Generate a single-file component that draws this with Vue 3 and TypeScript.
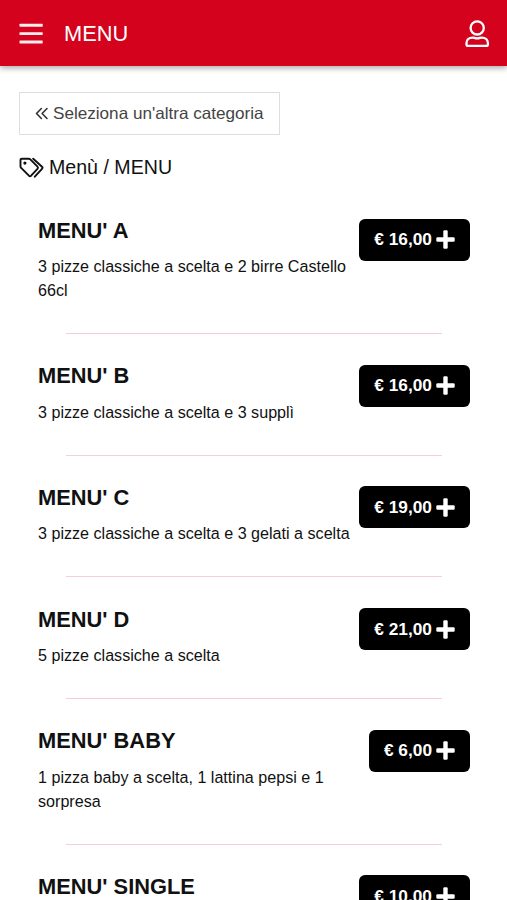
<script setup lang="ts">
interface MenuItem {
  name: string
  description: string
  price: string
}

const items: MenuItem[] = [
  { name: "MENU' A", description: '3 pizze classiche a scelta e 2 birre Castello 66cl', price: '16,00' },
  { name: "MENU' B", description: '3 pizze classiche a scelta e 3 supplì', price: '16,00' },
  { name: "MENU' C", description: '3 pizze classiche a scelta e 3 gelati a scelta', price: '19,00' },
  { name: "MENU' D", description: '5 pizze classiche a scelta', price: '21,00' },
  { name: "MENU' BABY", description: '1 pizza baby a scelta, 1 lattina pepsi e 1 sorpresa', price: '6,00' },
  { name: "MENU' SINGLE", description: '', price: '10,00' },
]
</script>

<template>
  <div class="page">
    <header class="bar">
      <button class="icon-button" aria-label="Menu">
        <svg width="24" height="22" viewBox="0 0 24 22" fill="#fff" fill-opacity=".93">
          <rect x=".5" y="1.800" width="23.200" height="2.900" rx=".4" />
          <rect x=".5" y="10.200" width="23.200" height="2.900" rx=".4" />
          <rect x=".5" y="18.600" width="23.200" height="2.900" rx=".4" />
        </svg>
      </button>
      <h1>MENU</h1>
      <button class="icon-button user" aria-label="Account">
        <svg width="26" height="30" viewBox="0 0 26 30" fill="none" stroke="#fff" stroke-width="2.300" stroke-linejoin="round">
          <circle cx="13.200" cy="9.900" r="6.600" />
          <path d="M8.700 19.600C4.800 19.600 2.500 22 2.500 25V26.200Q2.500 27.900 4.200 27.900H22.200Q23.900 27.900 23.900 26.200V25C23.900 22 21.600 19.600 17.700 19.600C16.400 19.600 15.400 20.400 13.200 20.400S10 19.600 8.700 19.600Z" />
        </svg>
      </button>
    </header>

    <main>
      <button class="back">
        <svg width="14" height="14" viewBox="0 0 14 14" fill="none" stroke="#333" stroke-width="1.600" stroke-linecap="round" stroke-linejoin="round">
          <path d="M6.400 1.500L1.500 6.500L6.400 11.500M12 1.500L7.100 6.500L12 11.500" />
        </svg>
        <span>Seleziona un'altra categoria</span>
      </button>

      <div class="crumbs">
        <svg width="25" height="22" viewBox="0 0 25 22" fill="none" stroke="#111" stroke-width="1.900" stroke-linecap="round" stroke-linejoin="round">
          <path d="M3 1.700H9.700Q10.600 1.700 11.300 2.400L18.500 9.600Q19.500 10.700 18.500 11.800L12.100 18.700Q11 19.700 9.900 18.700L2.400 11.200Q1.500 10.400 1.500 9.400V3.100Q1.500 1.700 3 1.700Z" />
          <path d="M14.200 1.700L23 9.700Q24 10.700 23 11.800L15.800 19.700" />
          <circle cx="5.900" cy="6.100" r="1.600" fill="#111" stroke="none" />
        </svg>
        <span>Menù / MENU</span>
      </div>

      <section class="list">
        <article v-for="item in items" :key="item.name" class="item">
          <div class="row">
            <div class="info">
              <h2>{{ item.name }}</h2>
              <p>{{ item.description }}</p>
            </div>
            <button class="price">
              <span>€ {{ item.price }}</span>
              <svg width="19" height="19" viewBox="0 0 19 19" fill="#fff">
                <rect x="7.300" y=".3" width="4.400" height="18.400" rx="1.200" />
                <rect x=".3" y="7.300" width="18.400" height="4.400" rx="1.200" />
              </svg>
            </button>
          </div>
          <hr />
        </article>
      </section>
    </main>
  </div>
</template>

<style>
body {
  background: #fff;
}
</style>

<style scoped>
.page {
  height: 900px;
  overflow: hidden;
  background: #fff;
  color: #111;
  font-family: "Liberation Sans", Arial, sans-serif;
}
button {
  font-family: inherit;
  cursor: pointer;
}
svg {
  display: block;
  flex: none;
}
.bar {
  box-sizing: border-box;
  height: 66px;
  padding: 0 17px 0 19px;
  display: flex;
  align-items: center;
  background: #d4021d;
  box-shadow: 0 2px 6px rgba(0, 0, 0, 0.35);
  color: #fff;
}
.icon-button {
  padding: 0;
  border: 0;
  background: none;
}
.user {
  margin-left: auto;
}
h1 {
  margin: 2px 0 0 21px;
  font-size: 21.800px;
  line-height: 26px;
  font-weight: 400;
}
main {
  padding: 26px 19px 0;
}
.back {
  box-sizing: border-box;
  width: 261px;
  height: 43px;
  padding: 0 15px;
  display: flex;
  align-items: center;
  gap: 4px;
  border: 1.500px solid #dedede;
  background: #fff;
  color: #444;
  font-size: 17.130px;
  white-space: nowrap;
}
.crumbs {
  margin-top: 21px;
  height: 24px;
  display: flex;
  align-items: center;
  gap: 5px;
  font-size: 19.600px;
}
.crumbs span {
  padding-bottom: 1.500px;
}
.list {
  padding: 37.400px 18px 0 19px;
}
.row {
  display: flex;
  align-items: flex-start;
  justify-content: space-between;
}
.info {
  flex: 1;
  min-width: 0;
}
h2 {
  margin: 0 0 10.200px;
  padding-top: 0.400px;
  font-size: 21.850px;
  line-height: 26px;
  font-weight: 700;
  white-space: nowrap;
}
p {
  margin: 0;
  min-height: 24px;
  font-size: 16.120px;
  line-height: 24px;
}
.price {
  height: 42px;
  margin-top: 1.600px;
  margin-left: 6px;
  padding: 0 15px;
  display: flex;
  align-items: center;
  gap: 4px;
  border: 0;
  border-radius: 6px;
  background: #000;
  color: #fff;
  font-size: 17.300px;
  font-weight: 700;
  white-space: nowrap;
}
hr {
  height: 1px;
  margin: 31px 28px 29.100px;
  border: 0;
  background: #f8ced5;
}
</style>
